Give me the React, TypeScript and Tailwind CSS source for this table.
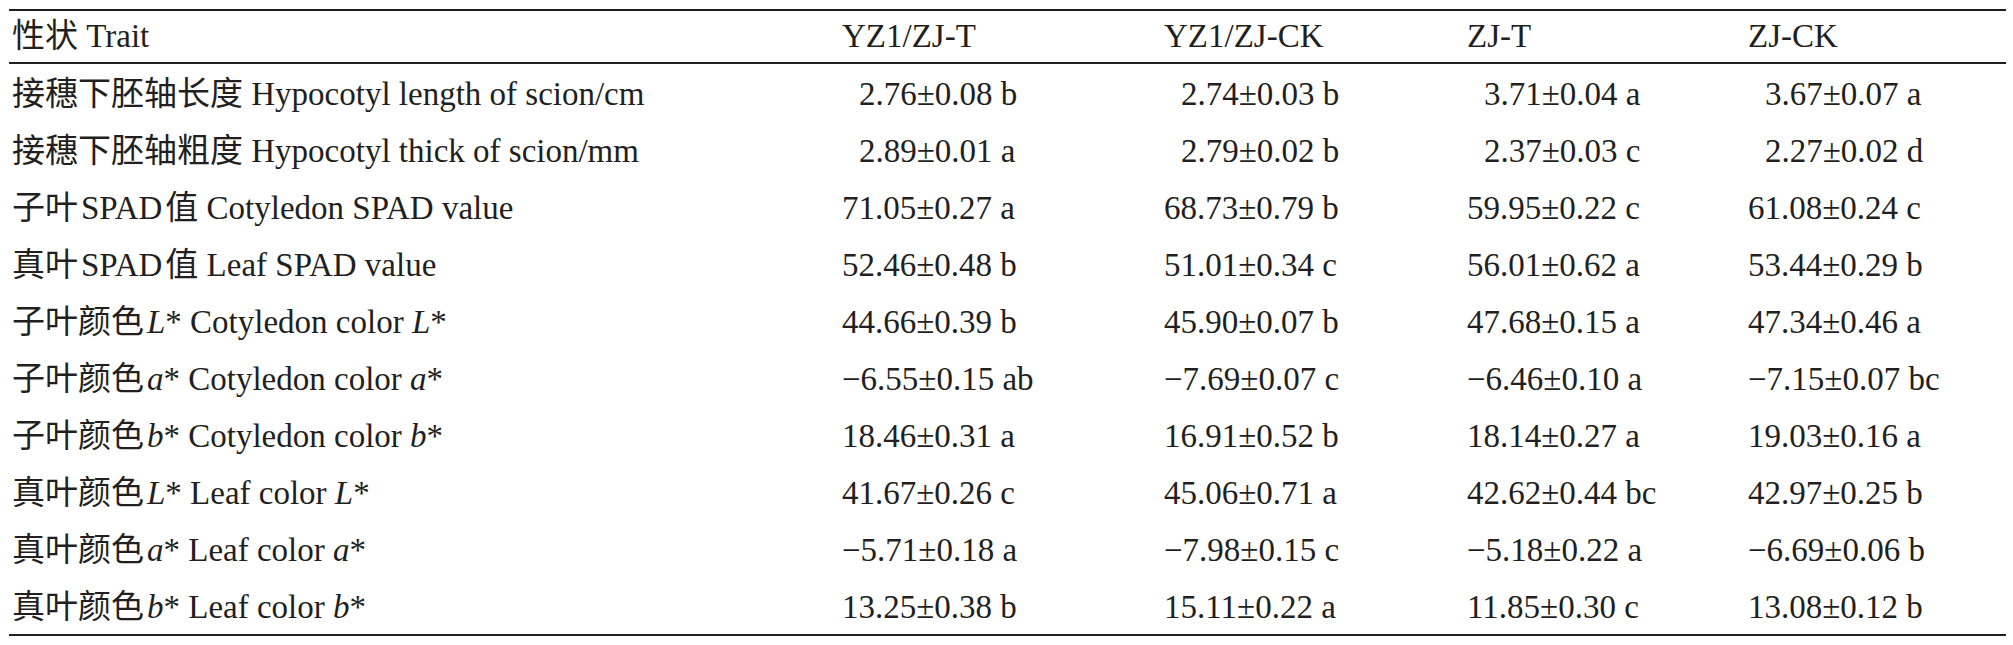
import React from "react";

type Row = { trait: React.ReactNode; vals: string[]; indent?: boolean };

const I = ({ c }: { c: string }) => <span className="italic">{c}</span>;
const C = ({ c }: { c: string }) => <span className="text-[33px]">{c}</span>;

const rows: Row[] = [
  { trait: <><C c="接穗下胚轴长度" /> Hypocotyl length of scion/cm</>, vals: ["2.76±0.08 b", "2.74±0.03 b", "3.71±0.04 a", "3.67±0.07 a"], indent: true },
  { trait: <><C c="接穗下胚轴粗度" /> Hypocotyl thick of scion/mm</>, vals: ["2.89±0.01 a", "2.79±0.02 b", "2.37±0.03 c", "2.27±0.02 d"], indent: true },
  { trait: <><C c="子叶" /><span className="ml-[3px]">SPAD</span><span className="ml-[3px]"><C c="值" /></span> Cotyledon SPAD value</>, vals: ["71.05±0.27 a", "68.73±0.79 b", "59.95±0.22 c", "61.08±0.24 c"] },
  { trait: <><C c="真叶" /><span className="ml-[3px]">SPAD</span><span className="ml-[3px]"><C c="值" /></span> Leaf SPAD value</>, vals: ["52.46±0.48 b", "51.01±0.34 c", "56.01±0.62 a", "53.44±0.29 b"] },
  { trait: <><C c="子叶颜色" /><span className="ml-[3px]"><I c="L" />*</span> Cotyledon color <I c="L" />*</>, vals: ["44.66±0.39 b", "45.90±0.07 b", "47.68±0.15 a", "47.34±0.46 a"] },
  { trait: <><C c="子叶颜色" /><span className="ml-[3px]"><I c="a" />*</span> Cotyledon color <I c="a" />*</>, vals: ["−6.55±0.15 ab", "−7.69±0.07 c", "−6.46±0.10 a", "−7.15±0.07 bc"] },
  { trait: <><C c="子叶颜色" /><span className="ml-[3px]"><I c="b" />*</span> Cotyledon color <I c="b" />*</>, vals: ["18.46±0.31 a", "16.91±0.52 b", "18.14±0.27 a", "19.03±0.16 a"] },
  { trait: <><C c="真叶颜色" /><span className="ml-[3px]"><I c="L" />*</span> Leaf color <I c="L" />*</>, vals: ["41.67±0.26 c", "45.06±0.71 a", "42.62±0.44 bc", "42.97±0.25 b"] },
  { trait: <><C c="真叶颜色" /><span className="ml-[3px]"><I c="a" />*</span> Leaf color <I c="a" />*</>, vals: ["−5.71±0.18 a", "−7.98±0.15 c", "−5.18±0.22 a", "−6.69±0.06 b"] },
  { trait: <><C c="真叶颜色" /><span className="ml-[3px]"><I c="b" />*</span> Leaf color <I c="b" />*</>, vals: ["13.25±0.38 b", "15.11±0.22 a", "11.85±0.30 c", "13.08±0.12 b"] },
];

const grid = "grid grid-cols-[833px_322px_303px_281px_1fr] items-center";

export default function App() {
  return (
    <div
      className="w-[2013px] h-[645px] bg-white pt-[9px] pl-[9px] text-[#231f20] text-[33px] leading-none"
      style={{ fontFamily: '"Liberation Serif", "Noto Sans CJK SC", serif' }}
    >
      <div className="w-[1997px] border-t-2 border-b-2 border-[#231f20]">
        <div className={`${grid} h-[53px] border-b-2 border-[#231f20]`}>
          <div className="pl-[3px]"><C c="性状" /> Trait</div>
          <div>YZ1/ZJ-T</div>
          <div>YZ1/ZJ-CK</div>
          <div>ZJ-T</div>
          <div>ZJ-CK</div>
        </div>
        {rows.map((r, i) => (
          <div key={i} className={`${grid} h-[57px] pt-[3px]`}>
            <div className="pl-[3px] whitespace-nowrap">{r.trait}</div>
            {r.vals.map((v, j) => (
              <div key={j} className={`whitespace-nowrap ${r.indent ? "pl-[17px]" : ""}`}>
                {v}
              </div>
            ))}
          </div>
        ))}
      </div>
    </div>
  );
}
